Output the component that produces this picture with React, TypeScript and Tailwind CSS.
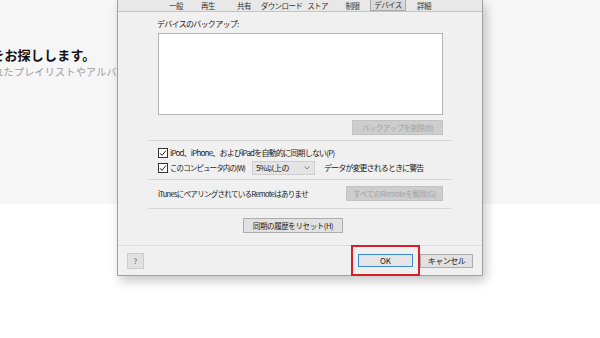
import React from "react";

const ui = { fontFamily: '"Noto Sans CJK JP", "Noto Sans", sans-serif' };

function Check() {
  return (
    <svg width="10" height="10" viewBox="0 0 10 10" className="shrink-0">
      <rect x="0.5" y="0.5" width="9" height="9" fill="#fff" stroke="#333" />
      <path d="M2 5.2 L4 7.3 L8 2.6" fill="none" stroke="#222" strokeWidth="1" />
    </svg>
  );
}

const tabs: [string, number][] = [
  ["一般", 30],
  ["再生", 34],
  ["共有", 38],
  ["ダウンロード", 37],
  ["ストア", 35],
  ["制限", 35],
  ["デバイス", 36],
  ["詳細", 36],
];

export default function App() {
  return (
    <div className="relative w-[600px] h-[338px] overflow-hidden bg-white" style={ui}>
      <div className="h-[204px] bg-[#f6f6f6] pt-[46px] flex flex-col">
        <div className="ml-[-22px] text-[13px] leading-[18px] font-bold text-[#111] whitespace-nowrap tracking-[0.2px]">
          曲をお探しします。
        </div>
        <div className="ml-[-17px] mt-[2px] text-[10px] leading-[12px] text-[#9a9a9a] whitespace-nowrap tracking-[0.3px]">
          入れたプレイリストやアルバムなど
        </div>
      </div>

      <div className="absolute left-[117px] top-0 w-[366px] h-[276px] border-x border-b border-[#a0a0a0] bg-[#f0f0f0] shadow-[3px_5px_10px_rgba(0,0,0,0.22)] flex flex-col text-[#1a1a1a]">
        <div className="h-[12px] bg-[#e8e8e8] border-b border-[#c4c4c4] flex items-stretch pl-[43px]">
          {tabs.map(([t, w]) => (
            <div key={t} className="flex justify-center whitespace-nowrap" style={{ width: w }}>
              {t === "デバイス" ? (
                <div className="h-[11px] px-[3px] bg-[#d9d9d9] border-x border-b border-[#a8a8a8] text-[7.5px] leading-[10px] tracking-[-0.6px] text-[#333] whitespace-nowrap">
                  {t}
                </div>
              ) : (
                <div className="text-[7.5px] leading-[11px] tracking-[-0.6px] text-[#333] whitespace-nowrap">{t}</div>
              )}
            </div>
          ))}
        </div>

        <div className="flex flex-col">
          <div className="ml-[39px] mt-[7px] text-[8px] leading-[10px] tracking-[-0.7px]">デバイスのバックアップ:</div>
          <div className="ml-[40px] mt-[4px] w-[285px] flex flex-col">
            <div className="h-[82px] bg-white border border-[#b4b4b4]" />
            <div className="self-end mt-[5px] w-[91px] h-[15px] bg-[#cdcdcd] border border-[#c2c2c2] text-[#a2a2a2] text-[7.5px] leading-[13px] text-center tracking-[-0.5px]">
              バックアップを削除(B)
            </div>
          </div>
          <div className="ml-[30px] mt-[5px] w-[303px] h-px bg-[#d6d6d6]" />

          <div className="ml-[40px] mt-[7px] flex items-center gap-[2px] h-[10px]">
            <Check />
            <span className="text-[8px] leading-[10px] tracking-[-0.8px] whitespace-nowrap">
              iPod、iPhone、およびiPadを自動的に同期しない(P)
            </span>
          </div>
          <div className="ml-[40px] mt-[3px] flex items-center h-[14px]">
            <Check />
            <span className="ml-[2px] w-[82px] text-[7.5px] leading-[10px] tracking-[-0.9px] whitespace-nowrap">
              このコンピュータ内の(W)
            </span>
            <div className="w-[63px] h-[14px] bg-[#e4e4e4] border border-[#cfcfcf] flex items-center justify-between pl-[3px] pr-[4px]">
              <span className="text-[8px] leading-[10px] tracking-[-0.6px] whitespace-nowrap">5%以上の</span>
              <svg width="6" height="4" viewBox="0 0 6 4">
                <path d="M0.5 0.5 L3 3 L5.5 0.5" fill="none" stroke="#666" strokeWidth="0.8" />
              </svg>
            </div>
            <span className="ml-[9px] text-[8px] leading-[10px] tracking-[-0.9px] whitespace-nowrap">
              データが変更されるときに警告
            </span>
          </div>
          <div className="ml-[30px] mt-[4px] w-[303px] h-px bg-[#d6d6d6]" />

          <div className="ml-[40px] mt-[6px] w-[285px] flex items-center justify-between h-[15px]">
            <span className="text-[7.5px] leading-[10px] tracking-[-0.7px] whitespace-nowrap">
              iTunesにペアリングされているRemoteはありませ
            </span>
            <div className="w-[97px] h-[15px] bg-[#cdcdcd] border border-[#c2c2c2] text-[#a2a2a2] text-[7.5px] leading-[13px] text-center tracking-[-0.4px]">
              すべてのRemoteを解除(G)
            </div>
          </div>
          <div className="ml-[30px] mt-[7px] w-[303px] h-px bg-[#d6d6d6]" />

          <div className="ml-[125px] mt-[9px] w-[100px] h-[15px] bg-[#e1e1e1] border border-[#adadad] text-[7.5px] leading-[13px] text-center tracking-[-0.4px]">
            同期の履歴をリセット(H)
          </div>
        </div>

        <div className="mt-[12px] h-px bg-[#dadada]" />
        <div className="flex items-center h-[29px] pl-[9px] pr-[9px]">
          <div className="w-[17px] h-[16px] bg-[#e1e1e1] border border-[#cccccc] text-[7px] leading-[14px] text-center text-[#555]">?</div>
          <div className="ml-auto w-[55px] h-[13px] bg-[#e5e5e5] border border-[#3a8ad8] text-[8px] leading-[11px] text-center">OK</div>
          <div className="ml-[7px] w-[53px] h-[14px] bg-[#e1e1e1] border border-[#adadad] text-[8px] leading-[12px] text-center tracking-[-0.5px]">
            キャンセル
          </div>
        </div>
      </div>

      <div className="absolute left-[351px] top-[245px] w-[69px] h-[31px] border-2 border-[#d51f2b]" />
    </div>
  );
}
